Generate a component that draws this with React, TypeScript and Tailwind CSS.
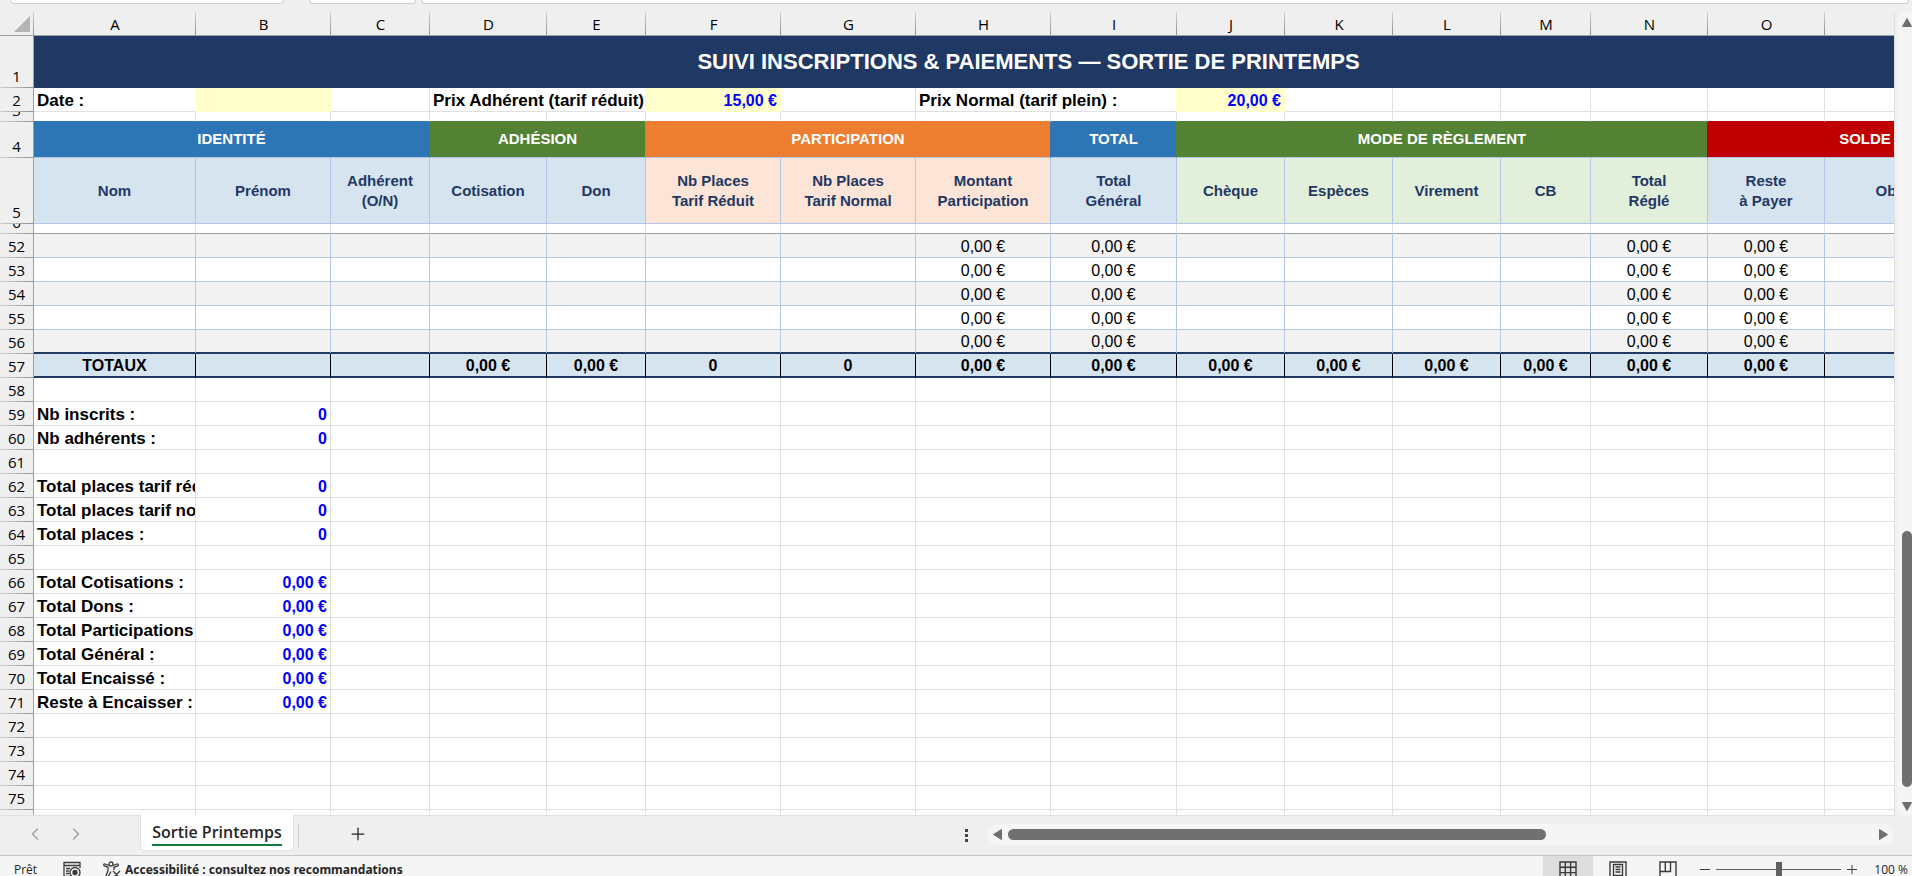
import { ChevronLeft, ChevronRight, Plus } from "lucide-react";
import { useState } from "react";

const columns = [
  { letter: "A", width: "w-[162px]", head: "Nom", tone: "blue" },
  { letter: "B", width: "w-[135px]", head: "Prénom", tone: "blue" },
  { letter: "C", width: "w-[99px]", head: "Adhérent\n(O/N)", tone: "blue" },
  { letter: "D", width: "w-[117px]", head: "Cotisation", tone: "blue" },
  { letter: "E", width: "w-[99px]", head: "Don", tone: "blue" },
  { letter: "F", width: "w-[135px]", head: "Nb Places\nTarif Réduit", tone: "orange" },
  { letter: "G", width: "w-[135px]", head: "Nb Places\nTarif Normal", tone: "orange" },
  { letter: "H", width: "w-[135px]", head: "Montant\nParticipation", tone: "orange" },
  { letter: "I", width: "w-[126px]", head: "Total\nGénéral", tone: "blue" },
  { letter: "J", width: "w-[108px]", head: "Chèque", tone: "green" },
  { letter: "K", width: "w-[108px]", head: "Espèces", tone: "green" },
  { letter: "L", width: "w-[108px]", head: "Virement", tone: "green" },
  { letter: "M", width: "w-[90px]", head: "CB", tone: "green" },
  { letter: "N", width: "w-[117px]", head: "Total\nRéglé", tone: "green" },
  { letter: "O", width: "w-[117px]", head: "Reste\nà Payer", tone: "blue" },
  { letter: "P", width: "w-[198px]", head: "Observations", tone: "blue" },
];

const tones: Record<string, string> = {
  blue: "bg-[#d6e4f0]",
  orange: "bg-[#fce4d6]",
  green: "bg-[#e2efda]",
};

const groups = [
  { label: "IDENTITÉ", span: 3, color: "bg-[#2e75b6]", edge: "border-r-[#548235]", top: "border-b-[#2e75b6]" },
  { label: "ADHÉSION", span: 2, color: "bg-[#548235]", edge: "border-r-[#ed7d31]", top: "border-b-[#548235]" },
  { label: "PARTICIPATION", span: 3, color: "bg-[#ed7d31]", edge: "border-r-[#2e75b6]", top: "border-b-[#ed7d31]" },
  { label: "TOTAL", span: 1, color: "bg-[#2e75b6]", edge: "border-r-[#548235]", top: "border-b-[#2e75b6]" },
  { label: "MODE DE RÈGLEMENT", span: 5, color: "bg-[#548235]", edge: "border-r-[#c00000]", top: "border-b-[#548235]" },
  { label: "SOLDE", span: 2, color: "bg-[#c00000]", edge: "border-r-[#c00000]", top: "border-b-[#c00000]" },
];

const summary: Record<number, [string, string]> = {
  59: ["Nb inscrits :", "0"],
  60: ["Nb adhérents :", "0"],
  62: ["Total places tarif réduit :", "0"],
  63: ["Total places tarif normal :", "0"],
  64: ["Total places :", "0"],
  66: ["Total Cotisations :", "0,00 €"],
  67: ["Total Dons :", "0,00 €"],
  68: ["Total Participations", "0,00 €"],
  69: ["Total Général :", "0,00 €"],
  70: ["Total Encaissé :", "0,00 €"],
  71: ["Reste à Encaisser :", "0,00 €"],
};

const computed = ["H", "I", "N", "O"];
const counted = ["F", "G"];
const blank = ["A", "B", "C", "P"];

const dataRows = [52, 53, 54, 55, 56];
const lowerRows = Array.from({ length: 19 }, (_, i) => 58 + i);

const cell = "overflow-hidden whitespace-nowrap border-r border-b p-0 leading-5";
const plain = "border-[#e0e0e0] bg-white";
const label = "pt-[3px] pl-[3px] text-[17px]";
const amount = "pt-[2px] pr-[3px] text-right text-[#0000ff]";

function RowHead({ n, height = "h-[23px]" }: { n: number; height?: string }) {
  return (
    <th
      scope="row"
      className="border-r border-[#a0a0a0] bg-[#efefef] bg-[linear-gradient(to_right,#d0d0d0,#909090)] bg-[length:100%_1px] bg-bottom bg-no-repeat p-0 pb-px font-normal"
    >
      <div
        className={`flex items-end justify-center overflow-hidden font-['Open_Sans',sans-serif] text-[15px] leading-[22px] ${height}`}
      >
        <span>{n}</span>
      </div>
    </th>
  );
}

function Sheet() {
  return (
    <table className="w-[2023px] table-fixed border-separate border-spacing-0 text-[16px] text-black">
      <colgroup>
        <col className="w-[34px]" />
        {columns.map((c) => (
          <col key={c.letter} className={c.width} />
        ))}
      </colgroup>
      <thead>
        <tr className="h-6">
          <td className="border-b border-[#a0a0a0] bg-[#efefef] bg-[linear-gradient(to_bottom,#d0d0d0,#909090)] bg-[length:1px_100%] bg-right bg-no-repeat p-0">
            <svg width="16" height="16" className="ml-[14px]" aria-hidden="true">
              <path d="M16 0V16H0z" fill="#b4b4b4" />
            </svg>
          </td>
          {columns.map((c) => (
            <th
              key={c.letter}
              scope="col"
              className="border-b border-[#a0a0a0] bg-[#efefef] bg-[linear-gradient(to_bottom,#d0d0d0,#909090)] bg-[length:1px_100%] bg-right bg-no-repeat p-0 font-['Open_Sans',sans-serif] text-[15px] leading-5 font-normal"
            >
              {c.letter}
            </th>
          ))}
        </tr>
      </thead>
      <tbody>
        {/* Title */}
        <tr className="h-[52px]">
          <RowHead n={1} height="h-[51px]" />
          <td colSpan={16} className="bg-[#1f3864] p-0 text-center text-[22px] leading-7 font-bold text-white">
            SUIVI INSCRIPTIONS &amp; PAIEMENTS — SORTIE DE PRINTEMPS
          </td>
        </tr>

        {/* Prices */}
        <tr className="h-6 font-bold">
          <RowHead n={2} />
          <td className={`${cell} ${label} border-r-[#ffffcc] border-b-[#e0e0e0] bg-white`}>Date :</td>
          <td className={`${cell} border-[#ffffcc] bg-[#ffffcc]`} />
          <td className={`${cell} ${plain}`} />
          <td colSpan={2} className={`${cell} ${label} border-r-[#ffffcc] border-b-[#e0e0e0] bg-white`}>
            Prix Adhérent (tarif réduit)
          </td>
          <td className={`${cell} ${amount} border-[#ffffcc] bg-[#ffffcc]`}>15,00 €</td>
          <td className={`${cell} ${plain}`} />
          <td colSpan={2} className={`${cell} ${label} border-r-[#ffffcc] border-b-[#e0e0e0] bg-white`}>
            Prix Normal (tarif plein) :
          </td>
          <td className={`${cell} ${amount} border-[#ffffcc] bg-[#ffffcc]`}>20,00 €</td>
          {["K", "L", "M", "N", "O", "P"].map((l) => (
            <td key={l} className={`${cell} ${plain}`} />
          ))}
        </tr>

        <tr className="h-[10px]">
          <RowHead n={3} height="h-[9px]" />
          {groups.flatMap((g) =>
            Array.from({ length: g.span }, (_, i) => (
              <td key={g.label + i} className={`${cell} border-r-[#e0e0e0] bg-white ${g.top}`} />
            ))
          )}
        </tr>

        {/* Column groups */}
        <tr className="h-9">
          <RowHead n={4} height="h-[35px]" />
          {groups.map((g) => (
            <th
              key={g.label}
              scope="colgroup"
              colSpan={g.span}
              className={`overflow-hidden border-r border-b border-b-[#b4c6e7] p-0 pb-[2px] text-center text-[15px] leading-5 font-bold whitespace-nowrap text-white ${g.color} ${g.edge}`}
            >
              {g.label}
            </th>
          ))}
        </tr>
        <tr className="h-[66px]">
          <RowHead n={5} height="h-[65px]" />
          {columns.map((c) => (
            <th
              key={c.letter}
              scope="col"
              className={`overflow-hidden border-r border-b border-[#b4c6e7] p-0 text-center text-[15px] leading-5 font-bold whitespace-pre-line text-[#1f3864] ${tones[c.tone]}`}
            >
              {c.head}
            </th>
          ))}
        </tr>
        <tr className="h-[10px]">
          <RowHead n={6} height="h-[9px]" />
          {columns.map((c) => (
            <td key={c.letter} className={`${cell} border-r-[#e0e0e0] border-b-[#a0a0a0] bg-white`} />
          ))}
        </tr>

        {/* Registrations */}
        {dataRows.map((n) => (
          <tr key={n} className="h-6">
            <RowHead n={n} />
            {columns.map((c) => (
              <td
                key={c.letter}
                className={`overflow-hidden border-r border-r-[#b4c6e7] p-0 pt-[2px] text-center leading-5 whitespace-nowrap ${
                  n === 56 ? "border-b-2 border-b-[#1f3864]" : "border-b border-b-[#b4c6e7]"
                } ${n % 2 === 0 ? "bg-[#f2f2f2]" : "bg-white"}`}
              >
                {computed.includes(c.letter) ? "0,00 €" : ""}
              </td>
            ))}
          </tr>
        ))}

        {/* Totals */}
        <tr className="h-6 font-bold">
          <RowHead n={57} />
          {columns.map((c) => (
            <td
              key={c.letter}
              className="overflow-hidden border-r border-b-2 border-r-black border-b-[#1f3864] bg-[#d6e4f0] p-0 pt-[2px] text-center leading-5 whitespace-nowrap"
            >
              {c.letter === "A" && "TOTAUX"}
              {counted.includes(c.letter) && "0"}
              {!counted.includes(c.letter) && !blank.includes(c.letter) && "0,00 €"}
            </td>
          ))}
        </tr>

        {/* Summary */}
        {lowerRows.map((n) => (
          <tr key={n} className="h-6 font-bold">
            <RowHead n={n} />
            <td className={`${cell} ${plain} ${label}`}>{summary[n]?.[0]}</td>
            <td className={`${cell} ${plain} ${amount}`}>{summary[n]?.[1]}</td>
            {columns.slice(2).map((c) => (
              <td key={c.letter} className={`${cell} ${plain}`} />
            ))}
          </tr>
        ))}
      </tbody>
    </table>
  );
}

function VerticalScroll() {
  return (
    <div className="w-[17px] shrink-0 overflow-hidden bg-[#efefef] pl-[2px]">
      <div className="flex h-full w-5 flex-col items-center rounded-[10px] bg-[#f5f5f5] pt-[6px] pb-[5px]">
        <svg width="10" height="9" aria-hidden="true">
          <path d="M5 0.5L9.5 8.5H0.5z" fill="#6e6e6e" stroke="#6e6e6e" strokeLinejoin="round" />
        </svg>
        <div className="flex-1" />
        <div className="mb-[15px] h-64 w-[10px] rounded-full bg-[#707070]" />
        <svg width="10" height="9" aria-hidden="true">
          <path d="M5 8.5L9.5 0.5H0.5z" fill="#6e6e6e" stroke="#6e6e6e" strokeLinejoin="round" />
        </svg>
      </div>
    </div>
  );
}

function TabBar() {
  return (
    <div className="flex h-10 shrink-0 border-b border-[#c6c6c6] bg-[#efefef]">
      <div className="flex w-[140px] items-center gap-[17px] pb-[3px] pl-[23px] text-[#9a9a9a]">
        <button aria-label="Feuille précédente" className="flex w-6 justify-center">
          <ChevronLeft size={20} strokeWidth={1.5} />
        </button>
        <button aria-label="Feuille suivante" className="flex w-6 justify-center">
          <ChevronRight size={20} strokeWidth={1.5} />
        </button>
      </div>

      {/* Active sheet */}
      <button className="z-10 -mt-px flex h-9 w-[154px] flex-col items-center rounded-b-[5px] border border-t-0 border-[#e0e0e0] bg-white pt-[5px] font-['Open_Sans',sans-serif] text-[16px] leading-6 font-semibold text-[#262626]">
        <span className="border-b-2 border-[#107c41]">Sortie Printemps</span>
      </button>
      <div className="mt-[7px] ml-1 h-6 w-px bg-[#d0d0d0]" />
      <button aria-label="Nouvelle feuille" className="ml-[49px] flex items-center pb-[3px] text-[#262626]">
        <Plus size={20} strokeWidth={1.5} />
      </button>

      <div className="mr-[19px] ml-auto flex flex-col justify-center gap-[2px] pb-px" aria-hidden="true">
        <i className="size-[3px] bg-[#444]" />
        <i className="size-[3px] bg-[#444]" />
        <i className="size-[3px] bg-[#444]" />
      </div>
      <div className="mt-2 mr-[18px] flex h-[21px] w-[907px] items-center rounded-full bg-[#f5f5f5] px-[6px]">
        <svg width="9" height="11" aria-hidden="true">
          <path d="M0.5 5.5L8.5 0.5V10.5z" fill="#6e6e6e" stroke="#6e6e6e" strokeLinejoin="round" />
        </svg>
        <div className="ml-[6px] h-[11px] w-[538px] rounded-full bg-[#707070]" />
        <svg width="9" height="11" className="ml-auto" aria-hidden="true">
          <path d="M8.5 5.5L0.5 0.5V10.5z" fill="#6e6e6e" stroke="#6e6e6e" strokeLinejoin="round" />
        </svg>
      </div>
    </div>
  );
}

function StatusBar() {
  const [zoom, setZoom] = useState(100);

  return (
    <div className="h-5 shrink-0 overflow-hidden bg-[#f5f5f5] font-['Open_Sans',sans-serif] text-[12px] text-[#262626]">
      <div className="flex h-[27px] items-center pl-[14px]">
        <span className="w-[49px]">Prêt</span>

        <svg width="18" height="18" fill="none" stroke="#3a3a3a" strokeWidth="1.3" aria-hidden="true">
          <path d="M8 15.5H1V1.5H17V7M1 4.5H17M3 7.5H7M3 10H6M3 12.5H6" />
          <circle cx="12" cy="11.5" r="5" />
          <circle cx="12" cy="11.5" r="2" fill="#3a3a3a" />
        </svg>

        <button className="ml-[22px] flex items-center gap-1 font-['Noto_Sans',sans-serif] font-bold">
          <svg width="18" height="18" fill="none" stroke="#3a3a3a" strokeWidth="1.3" aria-hidden="true">
            <circle cx="8" cy="3" r="2" />
            <path d="M6 4.5L2 3C0.5 2.5 0.3 4.3 1.4 4.8L5 6.3V9.5L3 15C2.8 16.3 4.5 16.8 5 15.6L8 10.5M10 4.5L14 3C15.5 2.5 15.7 4.3 14.6 4.8L11 6.3V9M10 10L17 17M17 10L10 17" />
          </svg>
          <span>Accessibilité : consultez nos recommandations</span>
        </button>

        {/* Views */}
        <div className="ml-auto flex h-full">
          <button aria-label="Normal" className="flex w-[50px] items-center justify-center bg-[#dedede]">
            <svg width="18" height="18" fill="none" stroke="#3a3a3a" strokeWidth="1.4" aria-hidden="true">
              <path d="M1 1H17V17H1zM1 6.3H17M1 11.6H17M6.3 1V17M11.6 1V17" />
            </svg>
          </button>
          <button aria-label="Mise en page" className="flex w-[50px] items-center justify-center">
            <svg width="18" height="18" fill="none" stroke="#3a3a3a" strokeWidth="1.4" aria-hidden="true">
              <path d="M1 1H17V17H1zM4.5 3.5H13.5V14.5H4.5zM6.5 6H11.5M6.5 8.5H11.5M6.5 11H11.5" />
            </svg>
          </button>
          <button aria-label="Aperçu des sauts de page" className="flex w-[50px] items-center justify-center">
            <svg width="18" height="18" fill="none" stroke="#3a3a3a" strokeWidth="1.4" aria-hidden="true">
              <path d="M1 1H17V17H1zM1 10.5H11.5V1M6.3 1V10.5" />
            </svg>
          </button>
        </div>

        {/* Zoom */}
        <button aria-label="Zoom arrière" className="ml-[7px] h-3 w-[10px]" onClick={() => setZoom(zoom - 10)}>
          <svg width="10" height="12" stroke="#3a3a3a" aria-hidden="true">
            <path d="M0 5.5H10" />
          </svg>
        </button>
        <input
          type="range"
          aria-label="Zoom"
          min={10}
          max={190}
          value={zoom}
          onChange={(e) => setZoom(Number(e.target.value))}
          className="mx-[6px] h-4 w-[125px] appearance-none bg-[linear-gradient(#606060,#606060)] bg-[length:100%_1px] bg-center bg-no-repeat [&::-webkit-slider-thumb]:h-[15px] [&::-webkit-slider-thumb]:w-[6px] [&::-webkit-slider-thumb]:appearance-none [&::-webkit-slider-thumb]:bg-[#606060]"
        />
        <button aria-label="Zoom avant" className="h-3 w-[10px]" onClick={() => setZoom(zoom + 10)}>
          <svg width="10" height="12" stroke="#3a3a3a" aria-hidden="true">
            <path d="M0 5.5H10M5 1V10" />
          </svg>
        </button>
        <span className="w-[55px] pr-1 text-right">{zoom} %</span>
      </div>
    </div>
  );
}

export default function App() {
  return (
    <div className="flex h-screen flex-col overflow-hidden bg-[#efefef] font-['Liberation_Sans',Arial,sans-serif]">
      {/* Lower edge of the formula bar */}
      <div className="flex h-3 shrink-0 items-start pr-[3px] pl-[10px]">
        <input aria-label="Zone Nom" className="h-1 w-[274px] rounded-b-[5px] border border-t-0 border-[#d0d0d0] bg-white" />
        <div className="ml-[25px] h-1 w-[107px] rounded-b-[5px] border border-t-0 border-[#d0d0d0] bg-white" />
        <input aria-label="Barre de formule" className="ml-[5px] h-1 flex-1 rounded-b-[5px] border border-t-0 border-[#d0d0d0] bg-white" />
      </div>

      <div className="flex min-h-0 flex-1">
        <div className="min-w-0 flex-1 overflow-hidden border-r border-b border-[#e0e0e0]">
          <Sheet />
        </div>
        <VerticalScroll />
      </div>

      <TabBar />
      <StatusBar />
    </div>
  );
}
